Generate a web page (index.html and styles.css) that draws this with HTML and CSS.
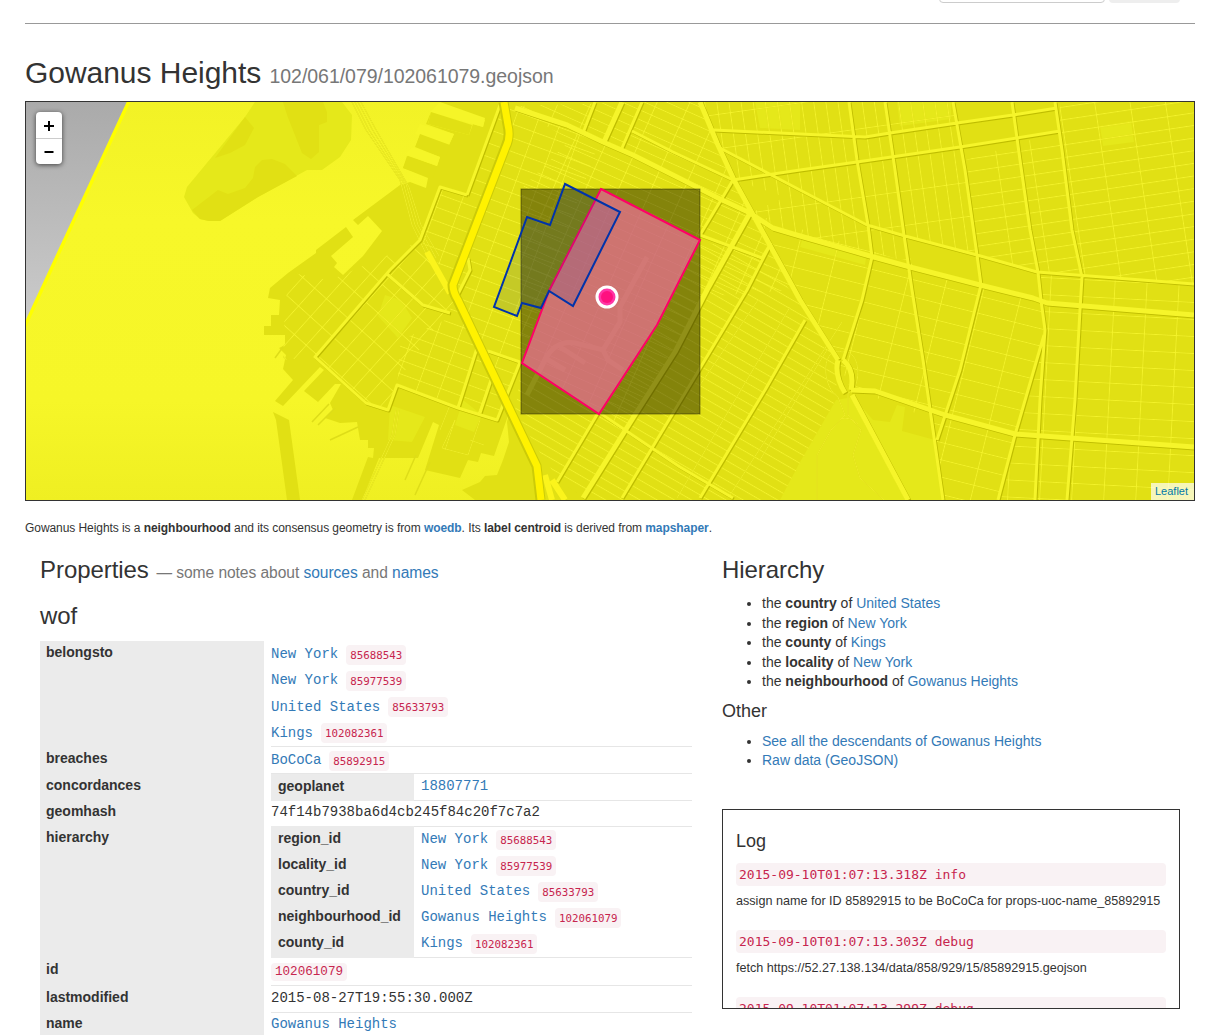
FILE: index.html
```html
<!DOCTYPE html>
<html lang="en">
<head>
<meta charset="utf-8">
<title>Gowanus Heights</title>
<link rel="stylesheet" href="styles.css">
</head>
<body>
<div class="page">
<header class="topbar"><div class="search"></div><div class="go"></div></header>
<h1><span class="place">Gowanus Heights</span> <small>102/061/079/102061079.geojson</small></h1>
<div class="map">
<svg viewBox="26 102 1168 398" width="1168" height="398">
<defs>
<linearGradient id="grey" x1="0" y1="0" x2="0" y2="1"><stop offset="0" stop-color="#aaa"/><stop offset="1" stop-color="#cbcbcb"/></linearGradient>
<linearGradient id="sea" x1="0" y1="0" x2="0" y2="1"><stop offset="0" stop-color="#f2f226"/><stop offset=".3" stop-color="#f7f729"/><stop offset=".75" stop-color="#f6f628"/><stop offset="1" stop-color="#efef22"/></linearGradient>
<pattern id="pA" width="24" height="16" patternUnits="userSpaceOnUse" patternTransform="translate(316 356) rotate(-48)"><path d="M0 1.500H24M1.500 0V16"/></pattern>
<pattern id="pB" width="13" height="22" patternUnits="userSpaceOnUse" patternTransform="translate(477 348) rotate(-70)"><path d="M0 1.500H13M1.500 0V22"/></pattern>
<pattern id="pC" width="30" height="9" patternUnits="userSpaceOnUse" patternTransform="translate(605 142) rotate(24)"><path d="M0 1.500H30M1.500 0V9"/></pattern>
<pattern id="pD" width="33" height="8.6" patternUnits="userSpaceOnUse" patternTransform="translate(625 430) rotate(30)"><path d="M0 1.500H33"/></pattern>
<pattern id="pE" width="12" height="34" patternUnits="userSpaceOnUse" patternTransform="translate(857 162) rotate(-8)"><path d="M1.500 0V34M0 1.500H12"/></pattern>
<pattern id="pF" width="35" height="12.5" patternUnits="userSpaceOnUse" patternTransform="translate(1062 131) rotate(-8.5)"><path d="M0 1.500H35M1.500 0V12.5"/></pattern>
<pattern id="pG" width="38" height="16.8" patternUnits="userSpaceOnUse" patternTransform="translate(862 300) rotate(14)"><path d="M0 1.500H38M1.500 0V16.8"/></pattern>
<pattern id="pH" width="32" height="17" patternUnits="userSpaceOnUse" patternTransform="translate(1080 312) rotate(3)"><path d="M0 1.500H32M1.500 0V17"/></pattern>
</defs>
<rect x="26" y="102" width="1168" height="398" fill="url(#sea)"/>
<g class="land">
<path class="park" d="M255 102 245 117 187 187 184 197 193 213 200 219 209 221H220L258 197 307 170H322L340 157 351 140 352 115 342 102Z"/>
<path d="M283 102 287 115 302 153 311 159 319 152V125L327 122V112L323 102ZM245 117 254 128 245 145 230 153 215 158ZM192 210 218 190 228 194 245 188 253 178 255 167 262 160 272 159 285 164 297 176 258 197 220 221H209L200 219Z"/>
<path d="M439 102 485 120 483 127 473 124 469 135 428 124 431 112 426 124 454 134 449 145 420 135 415 147 440 157 437 166 408 156 403 168 428 178 426 188 410 182 400 185 353 220 358 225 368 216 382 231 363 256 343 275 334 267 337 263 331 256 353 237 346 227 316 250V253L288 273 270 288 268 298 280 300 279 315H271V326H264V335H285V345L279 348 286 355 283 369 293 380 275 401 283 406 320 367 324 370 304 391 318 402 335 384 341 384 330 403 333 410 325 418 340 423 357 422 360 440H368V448H374L373 458 368 457 352 500H362L379 458H418L433 422 439 425 425 470 460 478 468 460 478 462 481 453 494 456 510 410 507 422 509 442 503 460 497 475 485 476 480 482 462 490 475 500H1194V102Z"/>
<path d="M273 412 289 420 300 500H287L276 420Z"/>
<path d="M400 102H439L430 112 485 128 475 139 428 125 425 129 454 140 447 147 416 135 413 150 403 140Z" fill="none"/>
</g>
<path class="water" d="M440 102 485 118 483 127 430 112ZM420 124 454 134 449 145 415 134ZM412 147 440 157 437 166 405 154Z"/>
<path class="land" d="M431 112 472 125 469 135 428 124ZM420 134 450 145 446 156 416 146ZM407 156 437 167 433 178 403 168Z"/>
<path class="pier" d="M312 422 329 404M318 425 335 408M330 440 358 427M275 358 283 347M405 480 416 455M415 495 430 462"/>
<path class="park" d="M800 462 836 400 853 397 873 420 890 422 897 405 905 407 902 431 935 440 943 500H780ZM1100 126 1131 121 1134 142 1103 146ZM755 102H800V130L760 128ZM897 102H951V119L900 126ZM385 295 401 300 412 318 398 338 378 316ZM390 405 425 417 412 442 388 440ZM802 240 866 257 865 265 800 247ZM463 400 482 415 474 432 455 425Z"/>
<g class="hatch">
<path fill="url(#pA)" d="M293 273 330 280 372 262 420 241 455 300 440 320 396 384 388 410 366 403 316 357 283 360 285 300Z"/>
<path fill="url(#pB)" d="M440 187 467 195 500 105 600 140 520 362 497 420 397 385 400 340 445 320 458 290 420 240Z"/>
<path fill="url(#pC)" d="M512 106 640 102H700L733 180 795 290 703 297 625 430 520 363 521 189 570 140Z"/>
<path fill="url(#pD)" d="M522 363 599 414 700 240 760 258 800 300 838 360 836 400 780 500H590L560 482 538 450 515 410Z"/>
<path fill="url(#pE)" d="M700 102H955L962 147 977 255 870 225 733 180ZM750 213 800 190 870 225 905 236 912 262 800 237Z"/>
<path fill="url(#pF)" d="M965 160 1060 131V102H1194V284L1037 272 977 255Z"/>
<path fill="url(#pG)" d="M750 213 981 285 1042 303 1044 335 1015 434 998 500H943L933 420 850 388 833 350Z"/>
<path fill="url(#pH)" d="M1038 272 1194 284V500H998L1044 335Z"/>
</g>
<g class="thread">
<path d="M352 102 366 130 400 180 412 225 430 262M355 102 369 130 403 182 415 225 433 260M358 102 372 129 406 184 418 225 436 258M361 102 375 128 409 187 421 225 439 256"/>
<path d="M396 410 392 435 362 500M399 410 395 435 365 500M842 352C822 345 820 385 838 397L845 415 831 430 817 455V500M842 352C862 348 862 390 848 393L848 415 861 430 853 455 860 478 884 500M840 419Q850 416 858 424"/>
<path d="M790 307 677 498M842 322 728 498M700 385 758 300M827 350 790 410 760 460M440 430 450 405M445 450 455 420 442 448 468 455 480 420M470 440 484 445"/>
</g>
<path class="canal" d="M527 395 545 360Q555 340 575 343L603 350 620 322V307L647 257M560 347 585 363M545 358 565 370M603 350 608 360 623 370"/>
<g class="street"><path d="M595 102 583 133M642 102 622 148M632 131 673 152 733 180 800 170 857 162 960 147 1060 131M720 148 800 190 867 225 905 236 977 255 1037 272 1194 284M713 130 800 134 865 137 890 133 957 123 1013 115 1057 108M849 102 857 160 868 225 872 257 862 300 843 360M885 102 895 170 904 235 912 290 923 360 933 430 943 500M953 102 965 170 977 255 981 285 960 370 937 440M1012 102 1020 160 1030 230 1038 272 1041 300 1045 330 1040 400 1035 500M1055 102 1062 150 1072 230 1082 277 1080 310 1075 400 1067 500M1044 335 1015 435 998 500"/>
<path d="M733 180 700 235 762 258 771 243M771 243 747 290 622 498M805 320 765 390 700 498M598 413 557 482M600 413 625 430 680 467 733 498M467 195 500 105M467 195 440 187 420 240 390 270 315 357 366 403 388 410 397 385 458 408 497 420 520 362 488 351M477 348 458 408M492 377 480 413M387 274 423 305 450 313M455 300 470 270 468 258"/>
<path class="avenue" d="M515 108 567 125 603 142 633 155 683 180 720 199 750 213 773 228 800 236 870 256 910 267 980 285 1033 298 1047 303 1194 315M700 102 717 143 735 182 767 240 800 300 838 360M622 102 604 142M750 213 707 290 675 352 633 418 583 498M851 390 875 391 910 403 945 415 1015 434 1070 438 1194 447M852 395 908 500M838 360Q834 375 845 393M843 360Q855 370 851 390"/>
</g>
<path class="ramp" d="M427 252 450 293M552 480 565 500M545 475 552 500"/>
<path class="highway-shade" d="M504 102 508 125Q511 137 506 147L453 285Q453 292 458 300L537 466 541 500"/>
<path class="highway" d="M504 102 508 125Q511 137 506 147L453 285Q453 292 458 300L537 466 541 500"/>
<path d="M26 102H128L26 322Z" fill="url(#grey)"/><path class="edge" d="M130 99 24 328"/>
<rect class="bbox" x="521" y="189" width="179" height="225"/>
<path class="shape" d="M601 189 700 240 657 325 599 414 522 363 549 291Z"/>
<path class="breach" d="M565 184 620 212 573 306 549 291 541 308 522 303 517 316 494 307 527 217 550 225Z"/>
<circle class="pin" cx="607" cy="297" r="10"/><circle class="pin-core" cx="607" cy="297" r="6"/>
</svg>
<div class="zoom"><a><svg width="12" height="12" viewBox="0 0 12 12"><path d="M1 6H11M6 1V11"/></svg></a><a><svg width="12" height="12" viewBox="0 0 12 12"><path d="M1.500 6H10.500"/></svg></a></div>
<div class="credit">Leaflet</div>
</div>
<p class="intro">Gowanus Heights is a <b>neighbourhood</b> and its consensus geometry is from <a><b>woedb</b></a>. Its <b>label centroid</b> is derived from <a><b>mapshaper</b></a>.</p>
<div class="columns">
<main>
<h2>Properties <small>— some notes about <a>sources</a> and <a>names</a></small></h2>
<h2 class="ns">wof</h2>
<div class="props">
<div class="row r-belongs"><div class="key">belongsto</div><div class="val"><p><a>New York</a> <code>85688543</code></p><p><a>New York</a> <code>85977539</code></p><p><a>United States</a> <code>85633793</code></p><p><a>Kings</a> <code>102082361</code></p></div></div>
<div class="row r27"><div class="key">breaches</div><div class="val"><p><a>BoCoCa</a> <code>85892915</code></p></div></div>
<div class="row r26"><div class="key">concordances</div><div class="val nest"><div class="sub"><div class="key">geoplanet</div><p class="plain"><a>18807771</a></p></div></div></div>
<div class="row r26"><div class="key">geomhash</div><div class="val"><p class="plain">74f14b7938ba6d4cb245f84c20f7c7a2</p></div></div>
<div class="row r-hier"><div class="key">hierarchy</div><div class="val nest">
<div class="sub"><div class="key">region_id</div><p><a>New York</a> <code>85688543</code></p></div>
<div class="sub"><div class="key">locality_id</div><p><a>New York</a> <code>85977539</code></p></div>
<div class="sub"><div class="key">country_id</div><p><a>United States</a> <code>85633793</code></p></div>
<div class="sub"><div class="key">neighbourhood_id</div><p><a>Gowanus Heights</a> <code>102061079</code></p></div>
<div class="sub"><div class="key">county_id</div><p><a>Kings</a> <code>102082361</code></p></div></div></div>
<div class="row r28"><div class="key">id</div><div class="val"><p><code class="big">102061079</code></p></div></div>
<div class="row r26"><div class="key">lastmodified</div><div class="val"><p class="plain">2015-08-27T19:55:30.000Z</p></div></div>
<div class="row r27"><div class="key">name</div><div class="val"><p class="plain"><a>Gowanus Heights</a></p></div></div>
</div>
</main>
<aside>
<h2>Hierarchy</h2>
<ul><li>the <b>country</b> of <a>United States</a></li><li>the <b>region</b> of <a>New York</a></li><li>the <b>county</b> of <a>Kings</a></li><li>the <b>locality</b> of <a>New York</a></li><li>the <b>neighbourhood</b> of <a>Gowanus Heights</a></li></ul>
<h3>Other</h3>
<ul><li><a>See all the descendants of Gowanus Heights</a></li><li><a>Raw data (GeoJSON)</a></li></ul>
<section class="log"><h3>Log</h3>
<code>2015-09-10T01:07:13.318Z info</code><p>assign name for ID 85892915 to be BoCoCa for props-uoc-name_85892915</p>
<code>2015-09-10T01:07:13.303Z debug</code><p>fetch https://52.27.138.134/data/858/929/15/85892915.geojson</p>
<code>2015-09-10T01:07:13.299Z debug</code></section>
</aside>
</div>
</div>
</body>
</html>
```
FILE: styles.css
```css
* { box-sizing: border-box; }
html, body { margin: 0; height: 1035px; overflow: hidden; }
body { font: 14px/20px "Liberation Sans", Arial, sans-serif; color: #333; background: #fff; }
.page { width: 1170px; margin-left: 25px; }
h1, h2, h3, p, ul { margin: 0; font-weight: 400; }
a { color: #337ab7; }
small { color: #777; }
.topbar { height: 24px; border-bottom: 1px solid #999; display: flex; justify-content: flex-end; gap: 4px; padding-right: 15px; overflow: hidden; }
.search { width: 166px; height: 34px; margin-top: -31px; border: 1px solid #ccc; border-radius: 4px; }
.go { width: 71px; height: 34px; margin-top: -31px; background: #eee; border-radius: 4px; }
h1 { height: 77px; padding-top: 32px; font-size: 30px; line-height: 33px; letter-spacing: -.04px; white-space: nowrap; }
h1 small { font-size: 19.5px; }
.map { position: relative; height: 400px; border: 1px solid #333; overflow: hidden; }
.map > svg { display: block; }
.land { fill: #e1e014; }
.park { fill: #e5e81a; }
.water { fill: #f5f528; }
pattern path { stroke: #f4f32a; stroke-width: 1.1; fill: none; }
.hatch, .thread { filter: drop-shadow(.7px .7px .2px #cfcd0a); }
.thread { fill: none; stroke: #efee28; stroke-width: 1; }
.pier { fill: none; stroke: #dedd18; stroke-width: 1.5; }
.canal { fill: none; stroke: #f5f528; stroke-width: 5; }
.street { fill: none; stroke: #f6f52a; stroke-width: 3; stroke-linejoin: round; filter: drop-shadow(1px 1.5px .5px #bfbd00); }
.street .avenue { stroke-width: 5; }
.ramp { fill: none; stroke: #fbf41c; stroke-width: 6; }
.highway, .highway-shade { fill: none; stroke: #fff200; stroke-width: 7; }
.highway-shade { stroke: #cccb08; stroke-width: 10; transform: translateX(-.5px); }
.edge { stroke: #ff0; stroke-width: 3.5; }
.bbox { fill: #000; fill-opacity: .41; stroke: #000; stroke-opacity: .4; }
.shape { fill: #ff69b4; fill-opacity: .6; stroke: #ff0066; stroke-width: 2; }
.breach { fill: #0033aa; fill-opacity: .12; stroke: #0033aa; stroke-width: 2; }
.pin { fill: #ff36a6; stroke: #fff; stroke-width: 3; }
.pin-core { fill: #ff1080; }
.zoom { position: absolute; left: 10px; top: 10px; width: 26px; height: 52px; border-radius: 4px; background: #fff; box-shadow: 0 1px 5px rgba(0,0,0,.65); }
.zoom a { display: flex; height: 26px; padding-top: 2px; align-items: center; justify-content: center; }
.zoom a + a { padding-top: 0; border-top: 1px solid #ccc; }
.zoom path { stroke: #000; stroke-width: 2; }
.credit { position: absolute; right: 0; bottom: 0; height: 17px; padding: 0 6px 0 4px; font-size: 11px; line-height: 17px; color: #0078a8; background: rgba(255,255,255,.7); }
.intro { height: 54px; padding-top: 17px; font-size: 12px; letter-spacing: -.065px; white-space: nowrap; }
.columns { display: grid; grid-template-columns: 652px 458px; gap: 30px; padding: 0 15px; }
h2 { font-size: 24px; line-height: 30px; letter-spacing: -.06px; white-space: nowrap; }
h2 small { font-size: 15.6px; margin-left: 1px; }
.ns { margin-top: 13px; margin-bottom: 10px; }
.row { display: grid; grid-template-columns: 224px 421px; gap: 7px; }
.r-belongs { height: 106px; }
.r26 { height: 26px; }
.r27 { height: 27px; }
.r28 { height: 28px; }
.r-hier { height: 132px; }
.key { background: #ebebeb; font-weight: 700; padding: 1px 6px; }
.val { border-bottom: 1px solid #e6e6e6; font-family: "Liberation Mono", monospace; }
.val p { height: 26.3px; line-height: 26px; white-space: nowrap; }
.val p.plain { line-height: 24px; }
.val code { margin-left: -.5px; padding: 3.5px 4px; font: 10.8px "DejaVu Sans Mono", monospace; color: #c7254e; background: #f9f2f4; border-radius: 4px; }
.val code.big { margin-left: 0; padding: 2px 4px; font: 12.6px "Liberation Mono", monospace; }
.sub { display: grid; grid-template-columns: 143px 1fr; gap: 7px; height: 26px; font-size: 14px; }
.nest .key { font-family: "Liberation Sans", Arial, sans-serif; padding: 2px 7px; }
.nest .sub:last-child .key { height: 27px; }
.r-hier .sub:last-child .key { height: 28px; }
aside ul { padding-left: 40px; margin-top: 9px; line-height: 19.5px; white-space: nowrap; }
h3 { font-size: 18px; line-height: 20px; }
aside > h3 { margin-top: 9px; }
aside > h3 + ul { margin-top: 11px; }
.log { height: 200px; margin-top: 38px; border: 1px solid #333; padding: 21px 13px 0; overflow: hidden; }
.log h3 { margin-bottom: 12px; }
.log code { display: block; height: 23px; padding: 0 3px; border-radius: 4px; background: #f9f2f4; color: #c7254e; font: 13px/23px "DejaVu Sans Mono", monospace; }
.log p { height: 44px; padding-top: 5px; font-size: 12.6px; white-space: nowrap; }
```
